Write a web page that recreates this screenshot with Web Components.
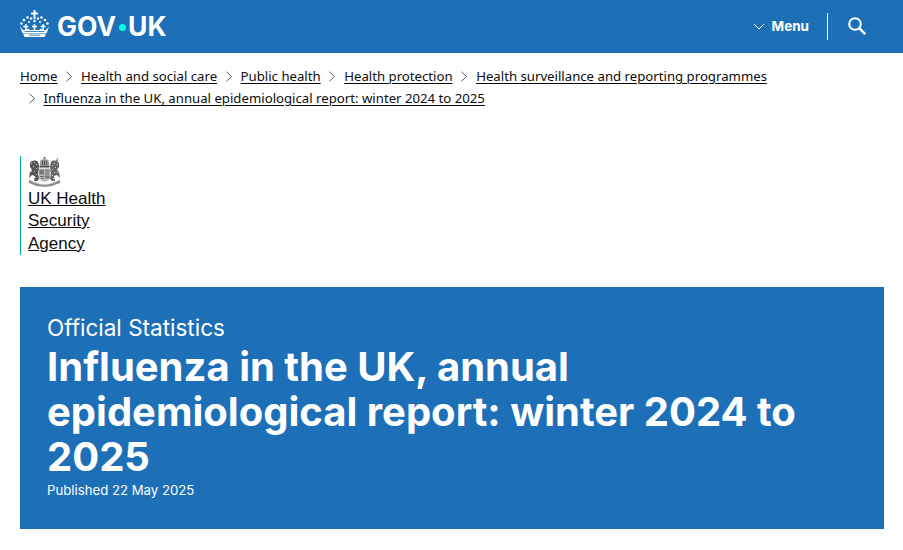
<!DOCTYPE html>
<html lang="en">
<head>
<meta charset="utf-8">
<title>Influenza in the UK, annual epidemiological report: winter 2024 to 2025</title>
<style>
  html, body { margin: 0; padding: 0; background: #fff; }
  body { font-family: "Noto Sans", Arial, sans-serif; color: #0b0c0c; }
</style>
</head>
<body>
<site-header></site-header>
<page-width>
  <bread-crumbs>
    <crumb-link first>Home</crumb-link>
    <crumb-link>Health and social care</crumb-link>
    <crumb-link>Public health</crumb-link>
    <crumb-link>Health protection</crumb-link>
    <crumb-link>Health surveillance and reporting programmes</crumb-link>
    <crumb-link>Influenza in the UK, annual epidemiological report: winter 2024 to 2025</crumb-link>
  </bread-crumbs>
  <org-logo>UK Health<br>Security<br>Agency</org-logo>
  <title-banner kicker="Official Statistics" published="Published 22 May 2025">Influenza in the UK, annual epidemiological report: winter 2024 to 2025</title-banner>
</page-width>

<script>
// top blue bar: crown + wordmark on the left, menu + search on the right
class SiteHeader extends HTMLElement {
  constructor() {
    super();
    const root = this.attachShadow({ mode: "open" });
    root.innerHTML = `
      <style>
        :host { display: block; background: #1d70b8; color: #fff; height: 53px; }
        .bar { display: flex; align-items: center; justify-content: space-between; height: 100%; padding: 0 20px; font-family: Inter, Arial, sans-serif; }
        .brand { display: flex; align-items: center; gap: 8px; }
        .crown { margin-top: -6px; }
        .word { font-size: 26.500px; font-weight: 700; line-height: 1; display: flex; align-items: center; }
        .dot { width: 7px; height: 7px; border-radius: 50%; background: #00ffe0; margin: 2px 2.500px 0; }
        .tools { display: flex; align-items: center; padding-right: 17px; margin-top: -1px; }
        .menu { display: flex; align-items: center; gap: 7px; font-size: 13.500px; font-weight: 700; padding-right: 18px; height: 27px; border-right: 1px solid #fff; }
        .search { margin-left: 20px; display: flex; }
      </style>
      <div class="bar">
        <div class="brand">
          <svg class="crown" width="29" height="27" viewBox="0 0 29 27" fill="#fff">
            <path d="M13.500 0h2v2.500H18v2h-2.500V9h-2V4.500H11v-2h2.500z"/>
            <circle cx="14.500" cy="11" r="1.300"/>
            <circle cx="11" cy="8.500" r="1.200"/><circle cx="18" cy="8.500" r="1.200"/>
            <circle cx="7.500" cy="7.500" r="1.300"/><circle cx="21.500" cy="7.500" r="1.300"/>
            <circle cx="4" cy="10" r="1.300"/><circle cx="25" cy="10" r="1.300"/>
            <circle cx="1.500" cy="13.500" r="1.300"/><circle cx="27.500" cy="13.500" r="1.300"/>
            <circle cx="9" cy="12" r="1"/><circle cx="20" cy="12" r="1"/>
            <path d="M5 14h1.600v1.700h1.700v1.500H6.600V20H5v-2.800H3.300v-1.500H5zM13.700 14h1.600v1.700H17v1.500h-1.700V20h-1.600v-2.800H12v-1.500h1.700zM22.400 14H24v1.700h1.700v1.500H24V20h-1.600v-2.800h-1.700v-1.500h1.700z"/>
            <path d="M0 16.500l3 3.500h3l2-1.500 2 1.500h9l2-1.500 2 1.500h3l3-3.500-2.300 6.500H2.300z"/>
            <path d="M3 23.500h23L24.500 27h-20z"/>
            <path d="M4.500 21.200h20v.8h-20z" fill="#1d70b8"/>
            <path d="M9 24.700h11v.9H9z" fill="#1d70b8"/>
          </svg>
          <span class="word">GOV<span class="dot"></span>UK</span>
        </div>
        <div class="tools">
          <div class="menu">
            <svg width="12" height="7" viewBox="0 0 12 7" fill="none" stroke="#fff" stroke-width="1"><path d="M1 1l5 5 5-5"/></svg>
            <span>Menu</span>
          </div>
          <span class="search">
            <svg width="18" height="18" viewBox="0 0 18 18" fill="none" stroke="#fff" stroke-width="2"><circle cx="7" cy="7" r="5.800"/><path d="M11.200 11.200l6 6" stroke-width="2.400"/></svg>
          </span>
        </div>
      </div>`;
  }
}
customElements.define("site-header", SiteHeader);

class PageWidth extends HTMLElement {
  constructor() {
    super();
    const root = this.attachShadow({ mode: "open" });
    root.innerHTML = `
      <style>:host { display: block; padding: 0 19px 0 20px; }</style>
      <slot></slot>`;
  }
}
customElements.define("page-width", PageWidth);

class BreadCrumbs extends HTMLElement {
  constructor() {
    super();
    const root = this.attachShadow({ mode: "open" });
    root.innerHTML = `
      <style>
        :host { display: flex; flex-wrap: wrap; padding-top: 12px; font-family: "Noto Sans", Arial, sans-serif; font-size: 13.200px; line-height: 22px; color: #0b0c0c; }
      </style>
      <slot></slot>`;
  }
}
customElements.define("bread-crumbs", BreadCrumbs);

// one breadcrumb, the chevron is drawn before it unless it is the first
class CrumbLink extends HTMLElement {
  constructor() {
    super();
    const root = this.attachShadow({ mode: "open" });
    const chevron = this.hasAttribute("first") ? "" :
      `<svg width="8" height="11" viewBox="0 0 8 11" fill="none" stroke="#505a5f" stroke-width="1"><path d="M1.500 .8l5 4.700-5 4.700"/></svg>`;
    root.innerHTML = `
      <style>
        :host { display: flex; align-items: center; white-space: nowrap; }
        svg { margin: 0 8px 0 7.500px; }
        a { color: inherit; text-decoration: underline; text-underline-offset: 2px; text-decoration-thickness: 1px; }
      </style>
      ${chevron}<a href="#"><slot></slot></a>`;
  }
}
customElements.define("crumb-link", CrumbLink);

// organisation block: royal arms over the agency name, with a teal rule on the left
class OrgLogo extends HTMLElement {
  constructor() {
    super();
    const root = this.attachShadow({ mode: "open" });
    root.innerHTML = `
      <style>
        :host { display: block; margin-top: 47px; width: fit-content; padding-left: 7px; border-left: 1px solid #00a398; font-family: "Liberation Sans", Arial, sans-serif; font-size: 17px; line-height: 22.500px; height: 99px; box-sizing: border-box; }
        svg { display: block; margin-bottom: .5px; }
        a { color: #0b0c0c; text-decoration: underline; }
      </style>
      <svg width="33" height="31" viewBox="0 0 33 31">
        <!-- crown -->
        <path d="M15.500 1h2v2h-2z" fill="#777"/>
        <path d="M12.500 4c1-1 7-1 8 0l1 6h-10z" fill="#999"/>
        <path d="M14 5h1v4h-1zM16 4.500h1V9h-1zM18 5h1v4h-1z" fill="#555"/>
        <path d="M11.500 10h10v1.500h-10z" fill="#444"/>
        <!-- shield -->
        <path d="M10.500 12.500h12v8c0 3-2.500 4.500-6 5.500-3.500-1-6-2.500-6-5.500z" fill="#bbb"/>
        <path d="M11.500 13.500h4.500v5h-4.500zM17 19.500h4.500v3H17z" fill="#777"/>
        <path d="M17 13.500h4.500v1H17zM17 15.500h4.500v1H17zM17 17.500h4.500v1H17zM12 20h4v1h-4zM13 22h3v1h-3z" fill="#666"/>
        <!-- lion -->
        <path d="M2 7c2-3 6-3 8-1l1 4-1 8 1 5-2 2H6l1-5-3-1-3 3 1-6 2-2-2-3z" fill="#555"/>
        <path d="M3 7h1v1H3zM6 6h1v1H6zM8 8h1v1H8zM5 10h1v1H5zM8 12h1v1H8zM6 15h1v1H6zM3 15h1v1H3zM8 18h1v1H8zM7 21h1v1H7z" fill="#ccc"/>
        <!-- unicorn -->
        <path d="M31 7c-2-3-6-3-8-1l-1 4 1 8-1 5 2 2h3l-1-5 3-1 3 3-1-6-2-2 2-3z" fill="#666"/>
        <path d="M27 6l3-5-1 6z" fill="#777"/>
        <path d="M29 8h1v1h-1zM26 7h1v1h-1zM24 9h1v1h-1zM27 11h1v1h-1zM24 13h1v1h-1zM26 16h1v1h-1zM29 16h1v1h-1zM24 19h1v1h-1zM25 22h1v1h-1z" fill="#ddd"/>
        <!-- motto ribbon -->
        <path d="M1 24c3 1 5 2 8 3 5 2 10 2 15 0 3-1 5-2 8-3v3c-3 1-5 2-8 3-5 1-10 1-15 0-3-1-5-2-8-3z" fill="#888"/>
        <path d="M4 26c8 3 17 3 25 0" fill="none" stroke="#eee" stroke-width=".6" stroke-dasharray="1.500 1"/>
      </svg>
      <a href="#"><slot></slot></a>`;
  }
}
customElements.define("org-logo", OrgLogo);

class TitleBanner extends HTMLElement {
  constructor() {
    super();
    const root = this.attachShadow({ mode: "open" });
    root.innerHTML = `
      <style>
        :host { display: block; margin-top: 32px; background: #1d70b8; color: #fff; padding: 25px 27px 30px; height: 242px; box-sizing: border-box; font-family: Inter, Arial, sans-serif; }
        .kicker { font-size: 22.500px; line-height: 32px; }
        h1 { margin: 0; font-size: 40px; line-height: 45px; font-weight: 700; max-width: 780px; }
        .pub { font-size: 13.200px; line-height: 20px; margin-top: 1px; }
      </style>
      <div class="kicker">${this.getAttribute("kicker")}</div>
      <h1><slot></slot></h1>
      <div class="pub">${this.getAttribute("published")}</div>`;
  }
}
customElements.define("title-banner", TitleBanner);
</script>
</body>
</html>
